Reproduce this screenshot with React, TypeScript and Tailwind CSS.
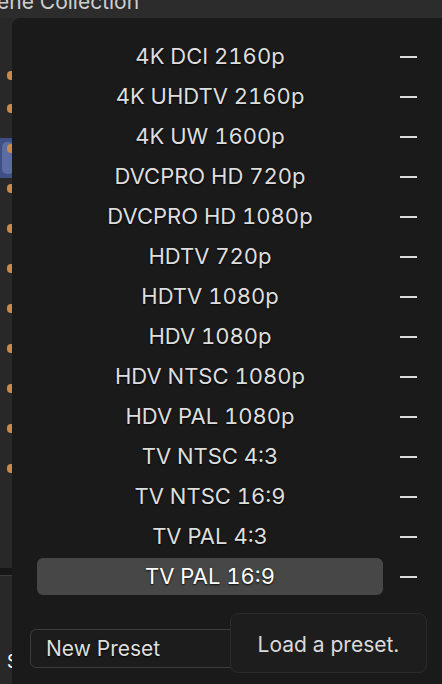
const presets = [
  "4K DCI 2160p",
  "4K UHDTV 2160p",
  "4K UW 1600p",
  "DVCPRO HD 720p",
  "DVCPRO HD 1080p",
  "HDTV 720p",
  "HDTV 1080p",
  "HDV 1080p",
  "HDV NTSC 1080p",
  "HDV PAL 1080p",
  "TV NTSC 4:3",
  "TV NTSC 16:9",
  "TV PAL 4:3",
  "TV PAL 16:9",
];

const iconRows = [75, 108, 148, 188, 228, 268, 308, 348, 388, 428, 468];

export default function App() {
  const font = { fontFamily: "Inter, 'Noto Sans', sans-serif" };

  return (
    <div
      className="relative w-[442px] h-[684px] overflow-hidden bg-[#2a2a2a] text-[#dcdcdc] flex flex-col"
      style={font}
    >
      {/* Outliner header, cut off */}
      <div className="h-[18px] shrink-0 bg-[#2c2c2c] overflow-hidden">
        <p className="-mt-[10px] -ml-[3px] text-[21px] leading-[24px] text-[#cfcfcf]">ene Collection</p>
      </div>

      <div className="flex flex-1 min-h-0">
        {/* Outliner strip behind the popup */}
        <div className="relative w-[12px] shrink-0 overflow-hidden bg-[#282828]">
          <div className="absolute left-0 top-[120px] w-[12px] h-[40px] bg-[#3e4f86]">
            <div className="ml-[2px] mt-[4px] w-[12px] h-[32px] rounded-[5px] bg-[#5b6ca3]" />
          </div>
          {iconRows.map((y) => (
            <span
              key={y}
              className="absolute left-[7px] w-[8px] h-[9px] rounded-full bg-[#c98a4b]"
              style={{ top: y - 18 - 4 }}
            />
          ))}
          <div className="absolute left-0 top-[550px] w-[12px] h-[7px] bg-[#171717]" />
          <div className="absolute left-0 top-[557px] w-[12px] h-[1px] bg-[#3c3c3c]" />
          <span className="absolute left-[7px] top-[634px] text-[18px] leading-[20px] text-white">S</span>
        </div>

        {/* Preset popup */}
        <div className="relative flex-1 rounded-tl-[8px] bg-[#1a1a1a] pt-[20px]">
          <div className="flex flex-col gap-[3px]">
            {presets.map((name) => {
              const active = name === "TV PAL 16:9";
              return (
                <div key={name} className="flex items-center h-[37px]">
                  <div
                    className={`ml-[25px] w-[346px] h-[37px] flex items-center justify-center rounded-[6px] text-[22px] tabular-nums [text-shadow:0_1px_2px_rgba(0,0,0,0.9)] ${
                      active ? "bg-[#474747] text-white" : "text-[#dedede]"
                    }`}
                  >
                    {name}
                  </div>
                  <span className="ml-[17px] w-[17px] h-[2px] bg-[#dcdcdc]" />
                </div>
              );
            })}
          </div>

          {/* Preset name field */}
          <div className="ml-[18px] mt-[34px] w-[260px] h-[39px] flex items-center rounded-[6px] border border-[#3c3c3c] bg-[#1c1c1c] px-[15px] text-[21px] text-[#dedede] [text-shadow:0_1px_2px_rgba(0,0,0,0.9)]">
            New Preset
          </div>

          {/* Tooltip */}
          <div className="absolute left-[218px] top-[595px] w-[197px] h-[60px] flex items-center justify-center rounded-[8px] border border-[#2b2b2b] bg-[#1d1d1d] pt-[3px] text-[21px] text-[#dadada]">
            Load a preset.
          </div>
        </div>
      </div>
    </div>
  );
}
